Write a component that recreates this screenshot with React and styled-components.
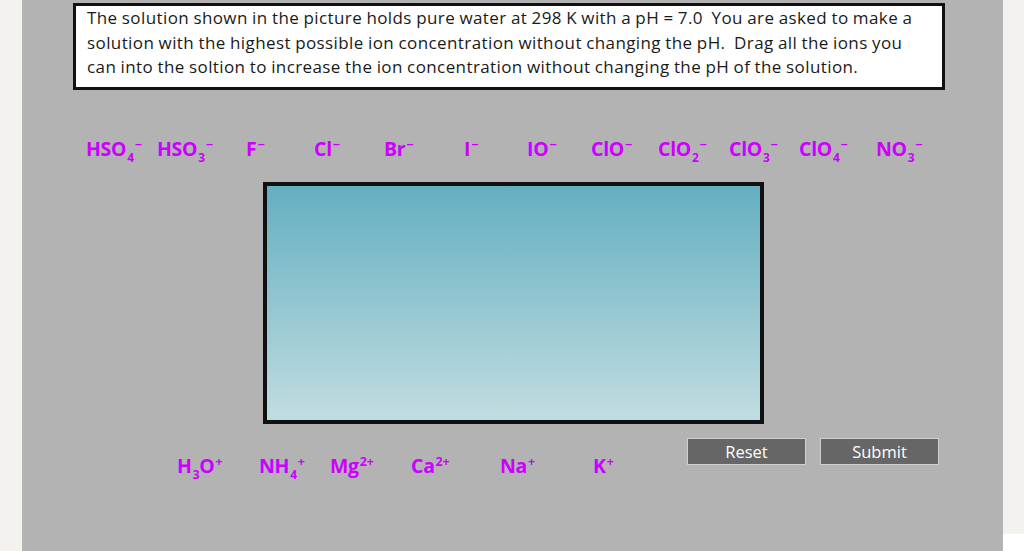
import React from 'react';
import styled, { createGlobalStyle } from 'styled-components';

const GlobalStyle = createGlobalStyle`
    html, body {
        margin: 0;
        padding: 0;
        background: #ffffff;
    }
    body {
        font-family: "Open Sans", Lato, sans-serif;
    }
`;

const Page = styled.div`
    display: flex;
    width: 1024px;
    height: 551px;
    overflow: hidden;
`;

const Strip = styled.div`
    width: ${(p) => p.width}px;
    height: ${(p) => p.height}px;
    background: #f3f2ef;
    flex-shrink: 0;
`;

const Panel = styled.div`
    width: 981px;
    height: 551px;
    background: #b3b3b3;
    display: flex;
    flex-direction: column;
    padding-top: 3px;
    box-sizing: border-box;
`;

const Prompt = styled.div`
    margin-left: 51px;
    width: 872px;
    height: 87px;
    box-sizing: border-box;
    border: 3px solid #111;
    background: #fff;
    padding: 0 0 0 11px;
    font-size: 17px;
    letter-spacing: 0.4px;
    word-spacing: -0.5px;
    line-height: 24.5px;
    color: #1a1a1a;
    white-space: nowrap;
`;

const IonRow = styled.div`
    display: flex;
    align-items: baseline;
    margin-left: ${(p) => p.left}px;
    margin-top: ${(p) => p.top}px;
    height: 30px;
`;

const Ion = styled.div`
    width: ${(p) => p.width}px;
    flex-shrink: 0;
    font-weight: 700;
    font-size: 19.5px;
    letter-spacing: -0.3px;
    color: #cc00ff;
    white-space: nowrap;
    cursor: grab;
`;

const Sub = styled.span`
    display: inline-block;
    font-size: 12px;
    vertical-align: -6px;
    margin-left: 1px;
`;

const Sup = styled.span`
    display: inline-block;
    font-size: 12.5px;
    vertical-align: 7px;
    margin-left: 1px;
`;

const Beaker = styled.div`
    margin: 17px 0 0 241px;
    width: 501px;
    height: 242px;
    box-sizing: border-box;
    border: 4px solid #111;
    background: linear-gradient(to bottom, #64afc1, #c1dde1);
`;

const Bottom = styled.div`
    display: flex;
    align-items: flex-start;
`;

const Buttons = styled.div`
    display: flex;
    gap: 14px;
    margin-left: ${(p) => p.left}px;
    padding-top: 14px;
`;

const Button = styled.button`
    width: 119px;
    height: 27px;
    box-sizing: border-box;
    background: #666;
    border: 1.5px solid #cfcfcf;
    color: #fff;
    font-family: "Open Sans", Lato, sans-serif;
    font-size: 16.5px;
    padding: 0;
    line-height: 22px;
    cursor: pointer;
`;

const MINUS = '−';

const anions = [
    { parts: ['HSO', '4'], charge: MINUS, width: 71 },
    { parts: ['HSO', '3'], charge: MINUS, width: 89 },
    { parts: ['F'], charge: MINUS, width: 68 },
    { parts: ['Cl'], charge: MINUS, width: 70 },
    { parts: ['Br'], charge: MINUS, width: 80 },
    { parts: ['I'], charge: MINUS, width: 63 },
    { parts: ['IO'], charge: MINUS, width: 64 },
    { parts: ['ClO'], charge: MINUS, width: 67 },
    { parts: ['ClO', '2'], charge: MINUS, width: 71 },
    { parts: ['ClO', '3'], charge: MINUS, width: 70 },
    { parts: ['ClO', '4'], charge: MINUS, width: 77 },
    { parts: ['NO', '3'], charge: MINUS, width: 60 },
];

const cations = [
    { parts: ['H', '3', 'O'], charge: '+', width: 82 },
    { parts: ['NH', '4'], charge: '+', width: 71 },
    { parts: ['Mg'], charge: '2+', width: 81 },
    { parts: ['Ca'], charge: '2+', width: 89 },
    { parts: ['Na'], charge: '+', width: 93 },
    { parts: ['K'], charge: '+', width: 40 },
];

// parts alternate: element text, subscript count, element text...
function IonLabel({ ion }) {
    return (
        <Ion width={ion.width}>
            {ion.parts.map((p, i) => (i % 2 === 0 ? <span key={i}>{p}</span> : <Sub key={i}>{p}</Sub>))}
            <Sup>{ion.charge}</Sup>
        </Ion>
    );
}

function App() {
    return (
        <Page>
            <GlobalStyle />
            <Strip width={22} height={551} />
            <Panel>
                <Prompt>
                    The solution shown in the picture holds pure water at 298 K with a pH = 7.0&nbsp; You are asked to make a
                    <br />
                    solution with the highest possible ion concentration without changing the pH.&nbsp; Drag all the ions you
                    <br />
                    can into the soltion to increase the ion concentration without changing the pH of the solution.
                </Prompt>

                <IonRow left={64} top={45}>
                    {anions.map((ion, i) => (
                        <IonLabel key={i} ion={ion} />
                    ))}
                </IonRow>

                <Beaker />

                <Bottom>
                    <IonRow left={155} top={28}>
                        {cations.map((ion, i) => (
                            <IonLabel key={i} ion={ion} />
                        ))}
                    </IonRow>
                    <Buttons left={54}>
                        <Button>Reset</Button>
                        <Button>Submit</Button>
                    </Buttons>
                </Bottom>
            </Panel>
            <Strip width={21} height={534} />
        </Page>
    );
}

export default App;
